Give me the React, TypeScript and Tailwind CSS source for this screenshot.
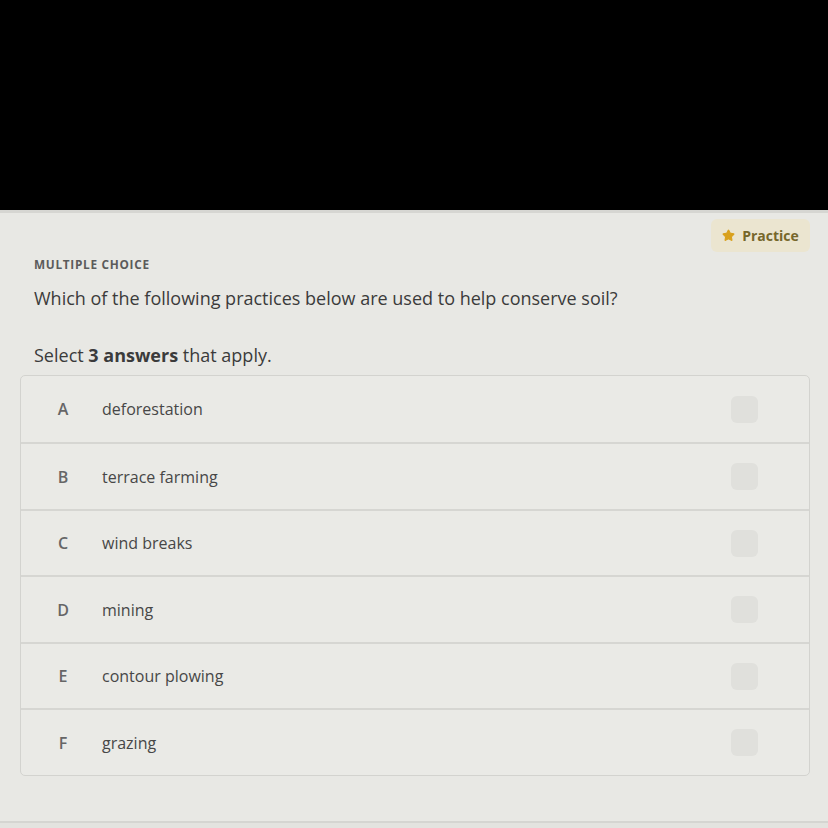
import { Star } from 'lucide-react'

const options = [
  { letter: 'A', text: 'deforestation' },
  { letter: 'B', text: 'terrace farming' },
  { letter: 'C', text: 'wind breaks' },
  { letter: 'D', text: 'mining' },
  { letter: 'E', text: 'contour plowing' },
  { letter: 'F', text: 'grazing' },
]

export default function App() {
  return (
    <div className="w-[828px] h-[828px] bg-[#e8e8e4] overflow-hidden flex flex-col font-['Open_Sans',sans-serif]">
      <div className="h-[210px] bg-black shrink-0" />
      <div className="h-[3px] bg-[#d6d6d2] shrink-0" />

      <div className="flex-1 flex flex-col pl-[20px] pr-[18px]">
        <div className="flex justify-end pt-[6px]">
          <div className="flex items-center gap-[7px] h-[33px] w-[99px] justify-center rounded-md bg-[#ebe5d0] text-[14px] font-bold text-[#76672b]">
            <Star className="w-[13px] h-[13px] fill-[#d9a11d] text-[#d9a11d]" />
            Practice
          </div>
        </div>

        <div className="px-[14px]">
          <p className="mt-[7px] text-[11.8px] font-bold tracking-[0.06em] text-[#5b5b5b] leading-none">
            MULTIPLE CHOICE
          </p>
          <p className="mt-[16px] text-[18px] text-[#3b3b3b] leading-tight">
            Which of the following practices below are used to help conserve soil?
          </p>
          <p className="mt-[35px] text-[18px] text-[#3b3b3b] leading-tight">
            Select <span className="font-bold">3 answers</span> that apply.
          </p>
        </div>

        <div className="mt-[8px] border border-[#d3d3cf] rounded-[5px] bg-[#eaeae6] overflow-hidden">
          {options.map((o, i) => (
            <div
              key={o.letter}
              className={`flex items-center h-[66.5px] ${i > 0 ? 'border-t-2 border-[#d6d6d2]' : ''}`}
            >
              <span className="w-[81px] text-center text-[16px] font-semibold text-[#666] pl-[3px]">
                {o.letter}
              </span>
              <span className="flex-1 text-[16px] text-[#474747]">{o.text}</span>
              <span className="w-[27px] h-[27px] rounded-[6px] bg-[#e0e0dc] mr-[51px]" />
            </div>
          ))}
        </div>

        <div className="flex-1" />
      </div>
      <div className="h-[2px] bg-[#d5d5d1] shrink-0" />
      <div className="h-[5px] bg-[#e3e3df] shrink-0" />
    </div>
  )
}
